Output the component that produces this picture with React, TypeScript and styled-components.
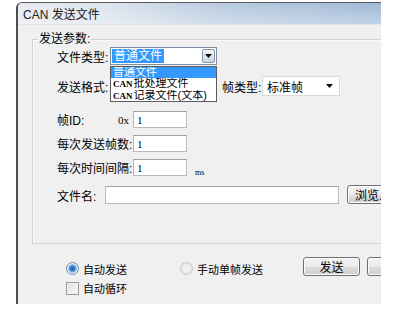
import React from 'react';
import styled, { createGlobalStyle } from 'styled-components';

const Global = createGlobalStyle`
  html, body { margin: 0; padding: 0; background: #ffffff; }
  body {
    font-family: "Liberation Sans", "Noto Sans CJK SC", sans-serif;
    font-size: 12px;
    color: #000;
  }
  * { box-sizing: border-box; }
`;

const Window = styled.div`
  margin: 2px 0 0 16px;
  width: 365px;
  height: 302px;
  border-left: 2px solid #4e4e4e;
  border-top: 1px solid #5a5a5a;
  border-top-left-radius: 6px;
  overflow: hidden;
  display: flex;
  flex-direction: column;
  background: #f0f0f0;
`;

const TitleBar = styled.div`
  height: 22px;
  flex: none;
  display: flex;
  align-items: center;
  padding-left: 5px;
  background:
    linear-gradient(to bottom, rgba(255,255,255,0) 0%, rgba(255,255,255,0.35) 100%),
    linear-gradient(to right, #e7ebf0 0%, #dbe3ec 25%, #b9cbe0 55%, #9fb9d7 100%);
  border-bottom: 1px solid #dbe6f3;
  font-size: 12px;
  color: #1a1a1a;
  white-space: nowrap;
`;

const Client = styled.div`
  flex: 1;
  display: flex;
  flex-direction: column;
`;

const GroupBox = styled.div`
  margin: 14px 0 0 14px;
  width: 400px;
  height: 205px;
  flex: none;
  border: 1px solid #d3d3d3;
  box-shadow: inset 1px 1px 0 #fbfbfb;
  padding-left: 24px;
  display: flex;
  flex-direction: column;
`;

const Legend = styled.div`
  margin: -8px 0 0 -19px;
  align-self: flex-start;
  height: 14px;
  line-height: 14px;
  padding: 0 1px;
  background: #f0f0f0;
  font-size: 12px;
`;

const Row = styled.div<{ $h: number; $mt: number }>`
  display: flex;
  align-items: center;
  height: ${(p) => p.$h}px;
  margin-top: ${(p) => p.$mt}px;
  flex: none;
`;

const Label = styled.span<{ $w: number; $ml?: number }>`
  width: ${(p) => p.$w}px;
  margin-left: ${(p) => p.$ml ?? 0}px;
  flex: none;
  font-size: 12px;
  white-space: nowrap;
`;

const Prefix = styled.span`
  width: 15px;
  flex: none;
  font-family: "Liberation Serif", serif;
  font-size: 11px;
`;

const Edit = styled.div<{ $w: number }>`
  width: ${(p) => p.$w}px;
  height: 100%;
  flex: none;
  background: #fff;
  border: 1px solid #b7b9bd;
  border-top-color: #9fa1a5;
  padding-left: 3px;
  display: flex;
  align-items: center;
  font-family: "Liberation Serif", serif;
  font-size: 11px;
`;

const Unit = styled.span`
  margin: 9px 0 0 8px;
  font-size: 8px;
  font-family: "Liberation Serif", serif;
  align-self: center;
`;

const ComboWrap = styled.div<{ $w: number }>`
  position: relative;
  width: ${(p) => p.$w}px;
  height: 100%;
  flex: none;
`;

const Combo = styled.div`
  width: 100%;
  height: 100%;
  background: #fff;
  border: 1px solid #7f8da0;
  display: flex;
  align-items: center;
  padding: 1px;
`;

const Selected = styled.span`
  background: #3399ff;
  color: #fff;
  height: 14px;
  line-height: 14px;
  padding: 0 2px;
  font-size: 12px;
`;

const DropButton = styled.div`
  margin-left: auto;
  width: 13px;
  height: 100%;
  border: 1px solid #8a96a6;
  border-radius: 2px;
  background: linear-gradient(to bottom, #f3f6fa 0%, #dde5ee 50%, #c9d5e2 100%);
  display: flex;
  align-items: center;
  justify-content: center;
`;

const FlatCombo = styled.div<{ $w: number }>`
  width: ${(p) => p.$w}px;
  height: 100%;
  flex: none;
  background: #fff;
  border: 1px solid #d9d9d9;
  display: flex;
  align-items: center;
  padding: 0 6px 0 4px;
  font-size: 12px;
  justify-content: space-between;
`;

const DropList = styled.div`
  position: absolute;
  left: 0;
  top: 19px;
  width: 107px;
  height: 36px;
  background: #fff;
  border: 1px solid #5c5c5c;
  display: flex;
  flex-direction: column;
  z-index: 2;
`;

const ListItem = styled.div<{ $active?: boolean }>`
  height: 11.3px;
  line-height: 11px;
  padding-left: 2px;
  font-size: 11px;
  white-space: nowrap;
  overflow: hidden;
  background: ${(p) => (p.$active ? '#3399ff' : 'transparent')};
  color: ${(p) => (p.$active ? '#fff' : '#000')};
`;

const Latin = styled.span`
  font-family: "Liberation Serif", serif;
  font-size: 9px;
  font-weight: bold;
  margin-right: 1px;
`;

const Button = styled.div<{ $w: number }>`
  width: ${(p) => p.$w}px;
  height: 100%;
  flex: none;
  border: 1px solid #707070;
  border-radius: 3px;
  background: linear-gradient(to bottom, #f2f2f2 0%, #ebebeb 50%, #dddddd 51%, #cfcfcf 100%);
  box-shadow: inset 0 0 0 1px #fcfcfc;
  display: flex;
  align-items: center;
  justify-content: center;
  font-size: 12px;
  white-space: nowrap;
`;

const Bottom = styled.div`
  margin: 15px 0 0 48px;
  display: grid;
  grid-template-columns: 114px 123px 57px 57px;
  grid-template-rows: 19px 14px;
  row-gap: 3px;
`;

const Choice = styled.label`
  display: flex;
  align-items: center;
  gap: 4px;
  font-size: 11px;
  white-space: nowrap;
`;

const Radio = styled.span<{ $checked?: boolean }>`
  width: 13px;
  height: 13px;
  flex: none;
  border-radius: 50%;
  border: 1px solid ${(p) => (p.$checked ? '#6b8aa9' : '#c4c4c4')};
  background: ${(p) =>
    p.$checked
      ? 'radial-gradient(circle at 50% 50%, #1d5f9c 0px, #3d8ad0 2.5px, #8ec0ea 4px, #e4eef7 4.6px, #f4f4f4 6px)'
      : 'radial-gradient(circle at 50% 50%, #f6f6f6 0px, #e6e6e6 6px)'};
`;

const Check = styled.span`
  width: 13px;
  height: 13px;
  flex: none;
  border: 1px solid #9a9a9a;
  background: linear-gradient(135deg, #dcdcdc 0%, #f0f0f0 60%, #fbfbfb 100%);
  box-shadow: inset 0 0 0 1px #f4f4f4;
`;

const ButtonCell = styled.div<{ $ml?: number }>`
  display: flex;
  margin-left: ${(p) => p.$ml ?? 0}px;
  margin-top: -2px;
  height: 19px;
`;

const Arrow = () => (
  <svg width="7" height="4" viewBox="0 0 7 4">
    <path d="M0 0 H7 L3.5 4 Z" fill="#111" />
  </svg>
);

export default function App() {
  return (
    <>
      <Global />
      <Window>
        <TitleBar>CAN 发送文件</TitleBar>
        <Client>
          <GroupBox>
            <Legend>发送参数:</Legend>
            <Row $h={18} $mt={1}>
              <Label $w={53}>文件类型:</Label>
              <ComboWrap $w={107}>
                <Combo>
                  <Selected>普通文件</Selected>
                  <DropButton>
                    <Arrow />
                  </DropButton>
                </Combo>
                <DropList>
                  <ListItem $active>普通文件</ListItem>
                  <ListItem>
                    <Latin>CAN</Latin>批处理文件
                  </ListItem>
                  <ListItem>
                    <Latin>CAN</Latin>记录文件(文本)
                  </ListItem>
                </DropList>
              </ComboWrap>
            </Row>
            <Row $h={20} $mt={11}>
              <Label $w={53}>发送格式:</Label>
              <FlatCombo $w={107}>
                <span>标准格式</span>
                <Arrow />
              </FlatCombo>
              <Label $w={40} $ml={5}>帧类型:</Label>
              <FlatCombo $w={78}>
                <span>标准帧</span>
                <Arrow />
              </FlatCombo>
            </Row>
            <Row $h={17} $mt={15}>
              <Label $w={61}>帧ID:</Label>
              <Prefix>0x</Prefix>
              <Edit $w={54}>1</Edit>
            </Row>
            <Row $h={17} $mt={7}>
              <Label $w={76}>每次发送帧数:</Label>
              <Edit $w={54}>1</Edit>
            </Row>
            <Row $h={17} $mt={7}>
              <Label $w={76}>每次时间间隔:</Label>
              <Edit $w={54}>1</Edit>
              <Unit>ms</Unit>
            </Row>
            <Row $h={18} $mt={10}>
              <Label $w={48}>文件名:</Label>
              <Edit $w={234} />
              <ButtonCell $ml={8}>
                <Button $w={50}>浏览...</Button>
              </ButtonCell>
            </Row>
          </GroupBox>
          <Bottom>
            <Choice>
              <Radio $checked />
              自动发送
            </Choice>
            <Choice>
              <Radio />
              手动单帧发送
            </Choice>
            <ButtonCell>
              <Button $w={57}>发送</Button>
            </ButtonCell>
            <ButtonCell $ml={7}>
              <Button $w={57}>停止</Button>
            </ButtonCell>
            <Choice>
              <Check />
              自动循环
            </Choice>
          </Bottom>
        </Client>
      </Window>
    </>
  );
}
